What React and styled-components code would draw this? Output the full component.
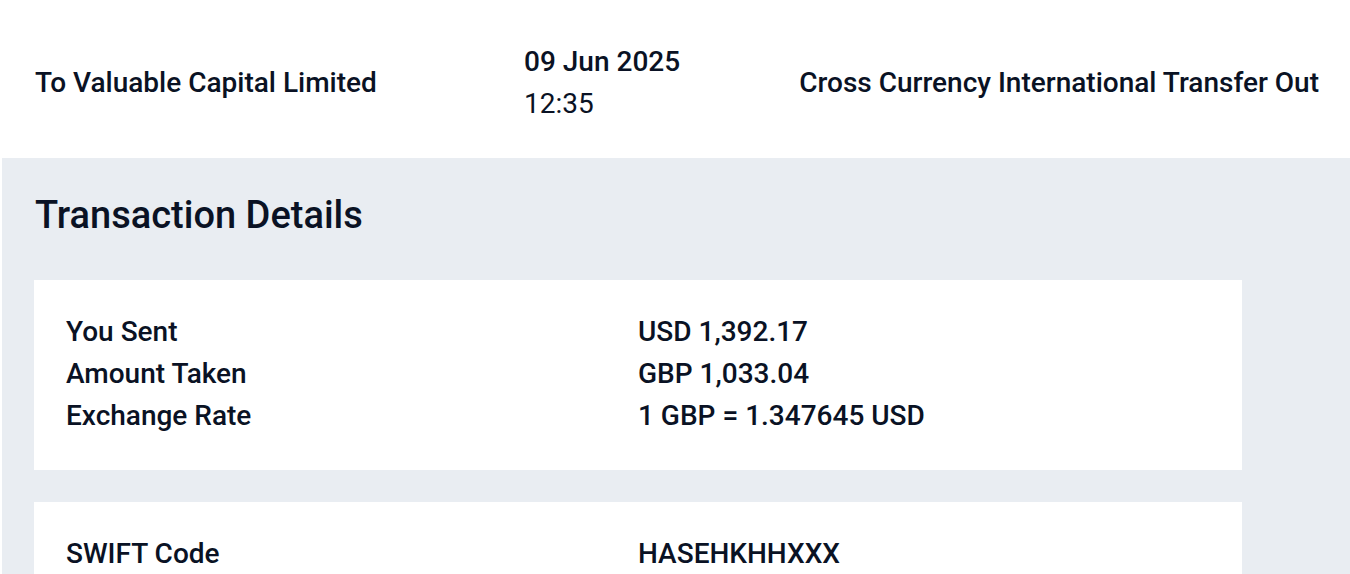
import styled, { createGlobalStyle } from "styled-components";

const GlobalStyle = createGlobalStyle`
  html, body {
    margin: 0;
    padding: 0;
    background: #ffffff;
  }
  body {
    font-family: Roboto, "Liberation Sans", sans-serif;
    color: #0a1224;
  }
`;

const Page = styled.div`
  width: 1350px;
  height: 574px;
  overflow: hidden;
  display: flex;
  flex-direction: column;
`;

const Header = styled.div`
  display: grid;
  grid-template-columns: 489px 1fr auto;
  align-items: center;
  height: 158px;
  padding: 6px 31px 0 35px;
  box-sizing: border-box;
  flex-shrink: 0;
`;

const Payee = styled.div`
  font-size: 28px;
  font-weight: 500;
`;

const DateBlock = styled.div`
  display: flex;
  flex-direction: column;
  padding-top: 2px;
  font-size: 28px;
  line-height: 42px;
`;

const DateLine = styled.span`
  font-weight: ${(p) => (p.$bold ? 500 : 400)};
`;

const TxType = styled.div`
  font-size: 28px;
  font-weight: 500;
`;

const Details = styled.div`
  flex: 1;
  margin-left: 2px;
  background: #e9edf2;
  padding: 34px 108px 0 32px;
  display: flex;
  flex-direction: column;
  gap: 32px;
`;

const Title = styled.h2`
  margin: 0 0 10px 1px;
  font-size: 38px;
  font-weight: 500;
  line-height: 46px;
`;

const Card = styled.div`
  background: #ffffff;
  padding: 31px 32px 33px;
  display: flex;
  flex-direction: column;
  flex-shrink: 0;
`;

const Row = styled.div`
  display: grid;
  grid-template-columns: 572px 1fr;
  font-size: 28px;
  font-weight: 500;
  line-height: 42px;
`;

const rates = [
  ["You Sent", "USD 1,392.17"],
  ["Amount Taken", "GBP 1,033.04"],
  ["Exchange Rate", "1 GBP = 1.347645 USD"],
];

const bank = [["SWIFT Code", "HASEHKHHXXX"]];

export default function App() {
  return (
    <Page>
      <GlobalStyle />
      <Header>
        <Payee>To Valuable Capital Limited</Payee>
        <DateBlock>
          <DateLine $bold>09 Jun 2025</DateLine>
          <DateLine>12:35</DateLine>
        </DateBlock>
        <TxType>Cross Currency International Transfer Out</TxType>
      </Header>
      <Details>
        <Title>Transaction Details</Title>
        <Card>
          {rates.map(([k, v]) => (
            <Row key={k}>
              <span>{k}</span>
              <span>{v}</span>
            </Row>
          ))}
        </Card>
        <Card>
          {bank.map(([k, v]) => (
            <Row key={k}>
              <span>{k}</span>
              <span>{v}</span>
            </Row>
          ))}
        </Card>
      </Details>
    </Page>
  );
}
